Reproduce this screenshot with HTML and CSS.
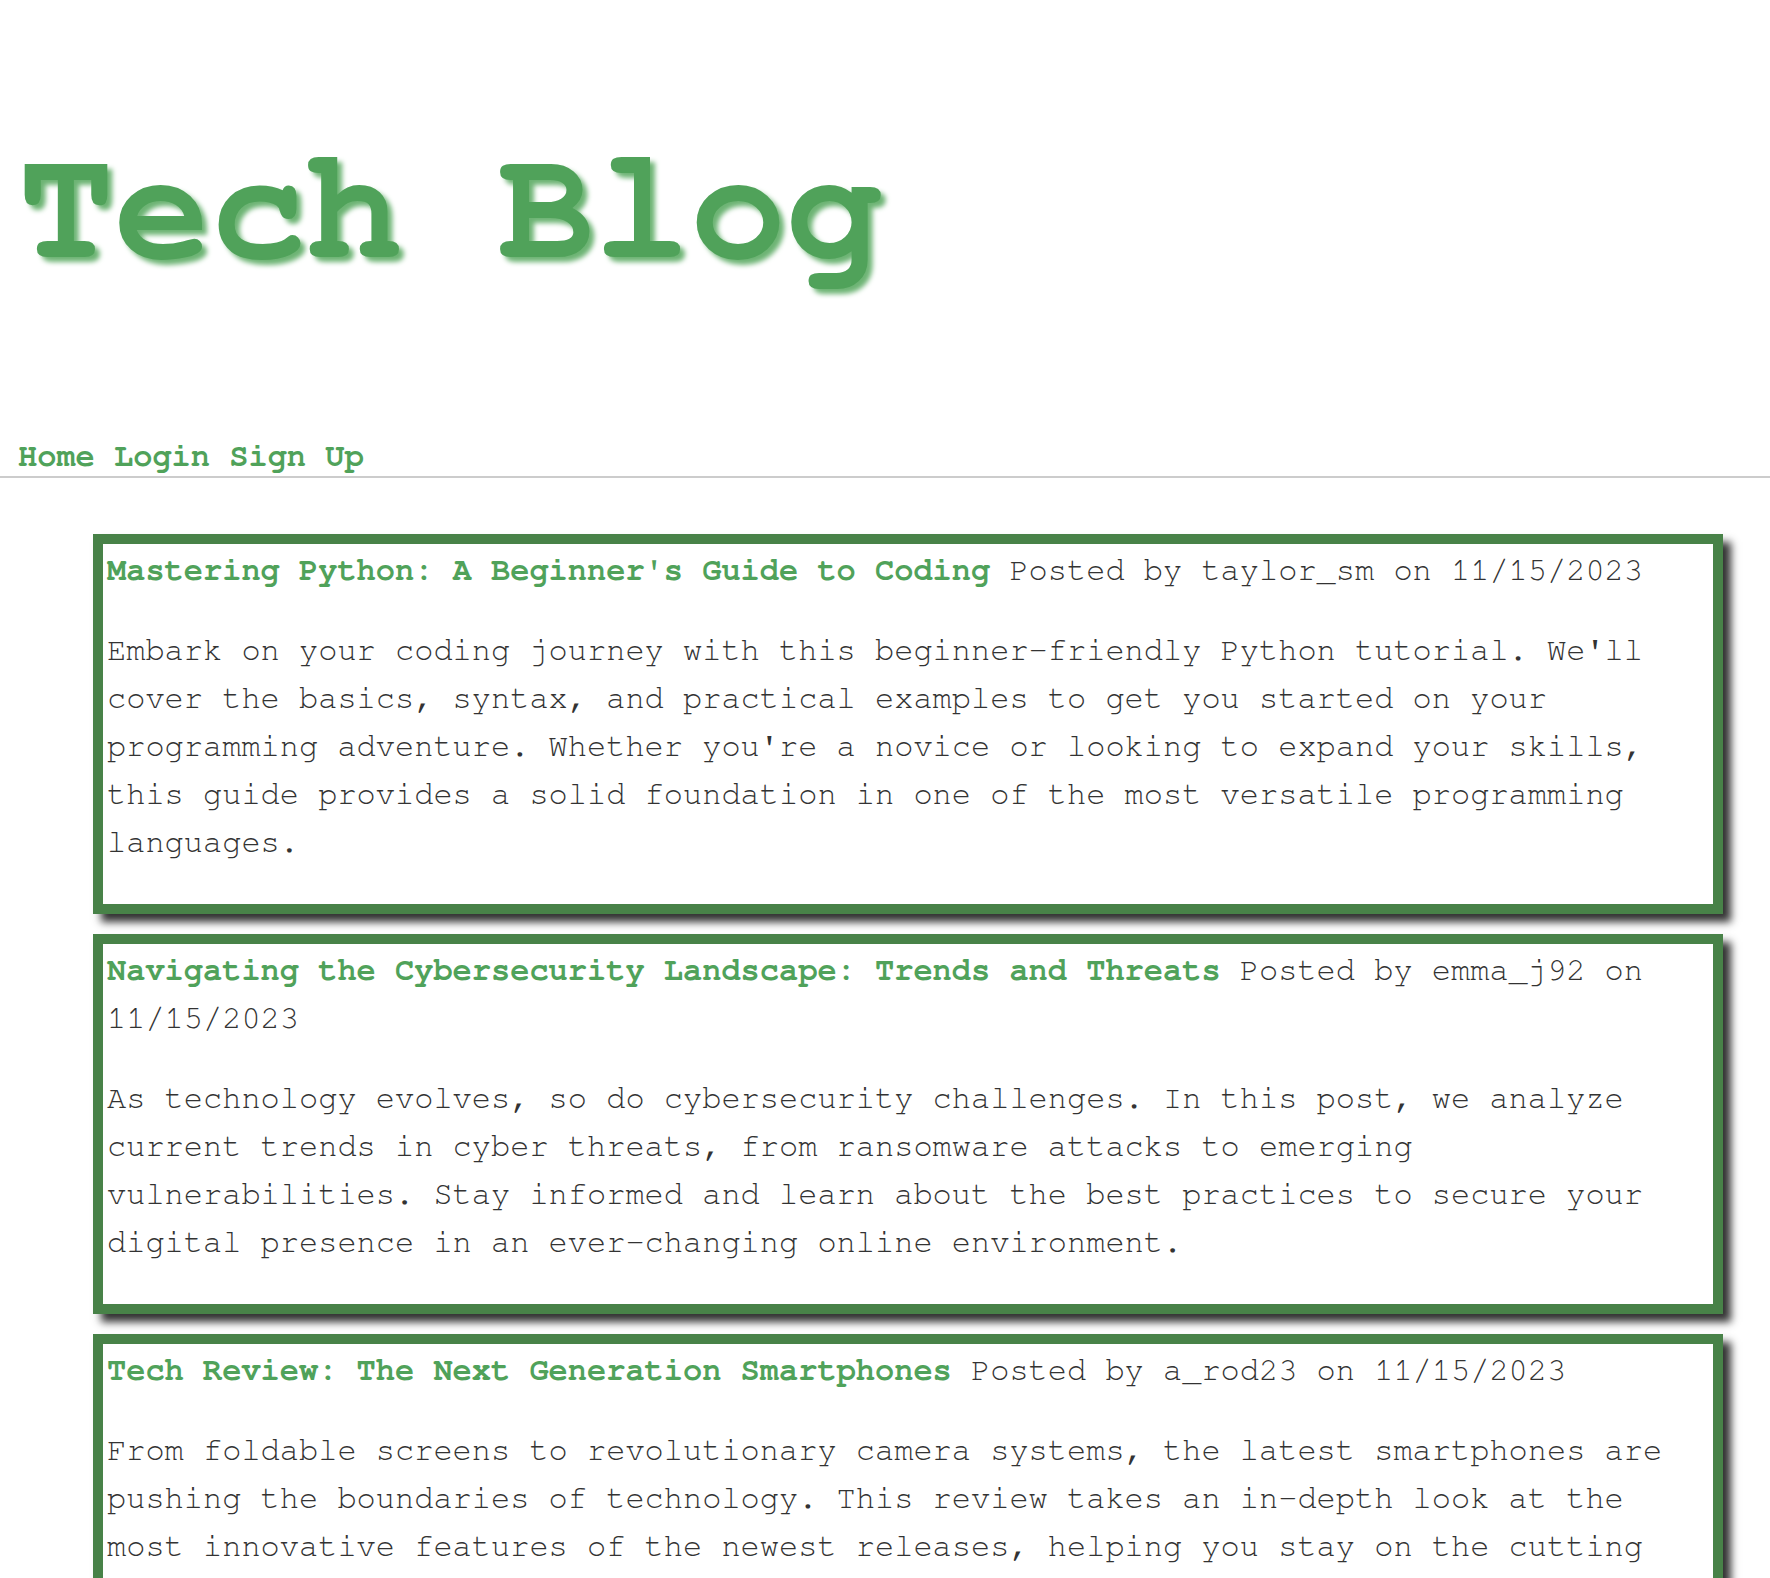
FILE: index.html
```html
<!DOCTYPE html>
<html lang="en">
<head>
<meta charset="utf-8">
<title>Tech Blog</title>
<link rel="stylesheet" href="styles.css">
</head>
<body>
<header class="site-header">
  <h1 class="site-title">Tech Blog</h1>
  <nav class="site-nav">
    <a href="#" class="nav-link">Home</a> <a href="#" class="nav-link">Login</a> <a href="#" class="nav-link">Sign Up</a>
  </nav>
</header>
<main class="posts">
  <article class="post">
    <p class="post-head"><a href="#" class="post-title">Mastering Python: A Beginner's Guide to Coding</a> Posted by taylor_sm on 11/15/2023</p>
    <p class="post-body">Embark on your coding journey with this beginner-friendly Python tutorial. We'll cover the basics, syntax, and practical examples to get you started on your programming adventure. Whether you're a novice or looking to expand your skills, this guide provides a solid foundation in one of the most versatile programming languages.</p>
  </article>
  <article class="post">
    <p class="post-head"><a href="#" class="post-title">Navigating the Cybersecurity Landscape: Trends and Threats</a> Posted by emma_j92 on 11/15/2023</p>
    <p class="post-body">As technology evolves, so do cybersecurity challenges. In this post, we analyze current trends in cyber threats, from ransomware attacks to emerging vulnerabilities. Stay informed and learn about the best practices to secure your digital presence in an ever-changing online environment.</p>
  </article>
  <article class="post">
    <p class="post-head"><a href="#" class="post-title">Tech Review: The Next Generation Smartphones</a> Posted by a_rod23 on 11/15/2023</p>
    <p class="post-body">From foldable screens to revolutionary camera systems, the latest smartphones are pushing the boundaries of technology. This review takes an in-depth look at the most innovative features of the newest releases, helping you stay on the cutting edge of mobile technology.</p>
  </article>
</main>
</body>
</html>
```

FILE: styles.css
```css
html, body {
  margin: 0;
  padding: 0;
  background: #ffffff;
}

body {
  font-family: "Nimbus Mono PS", "FreeMono", "Courier New", "Liberation Mono", monospace;
  color: #333333;
}

.site-header {
  border-bottom: 2px solid #cccccc;
}

.site-title {
  margin: 0;
  padding: 119px 18px 138px;
  font-size: 160px;
  line-height: 181px;
  font-weight: bold;
  color: #50a25a;
  text-shadow: 5px 5px 5px #6db474;
}

.site-nav {
  padding: 0 18px 2px;
  font-size: 32px;
  line-height: 36px;
  font-weight: bold;
}

.nav-link {
  color: #50a25a;
  text-decoration: none;
}

.posts {
  padding: 56px 47px 40px 93px;
  display: flex;
  flex-direction: column;
  gap: 20px;
}

.post {
  border: 10px solid #488248;
  padding: 2px 4px 6px;
  background: #ffffff;
  box-shadow: 8px 8px 8px #333333;
}

.post-head,
.post-body {
  margin: 0;
  font-size: 32px;
  line-height: 48px;
}

.post-head {
  margin-bottom: 32px;
}

.post-body {
  margin-bottom: 32px;
}

.post-title {
  color: #50a25a;
  font-weight: bold;
  text-decoration: none;
}
```
